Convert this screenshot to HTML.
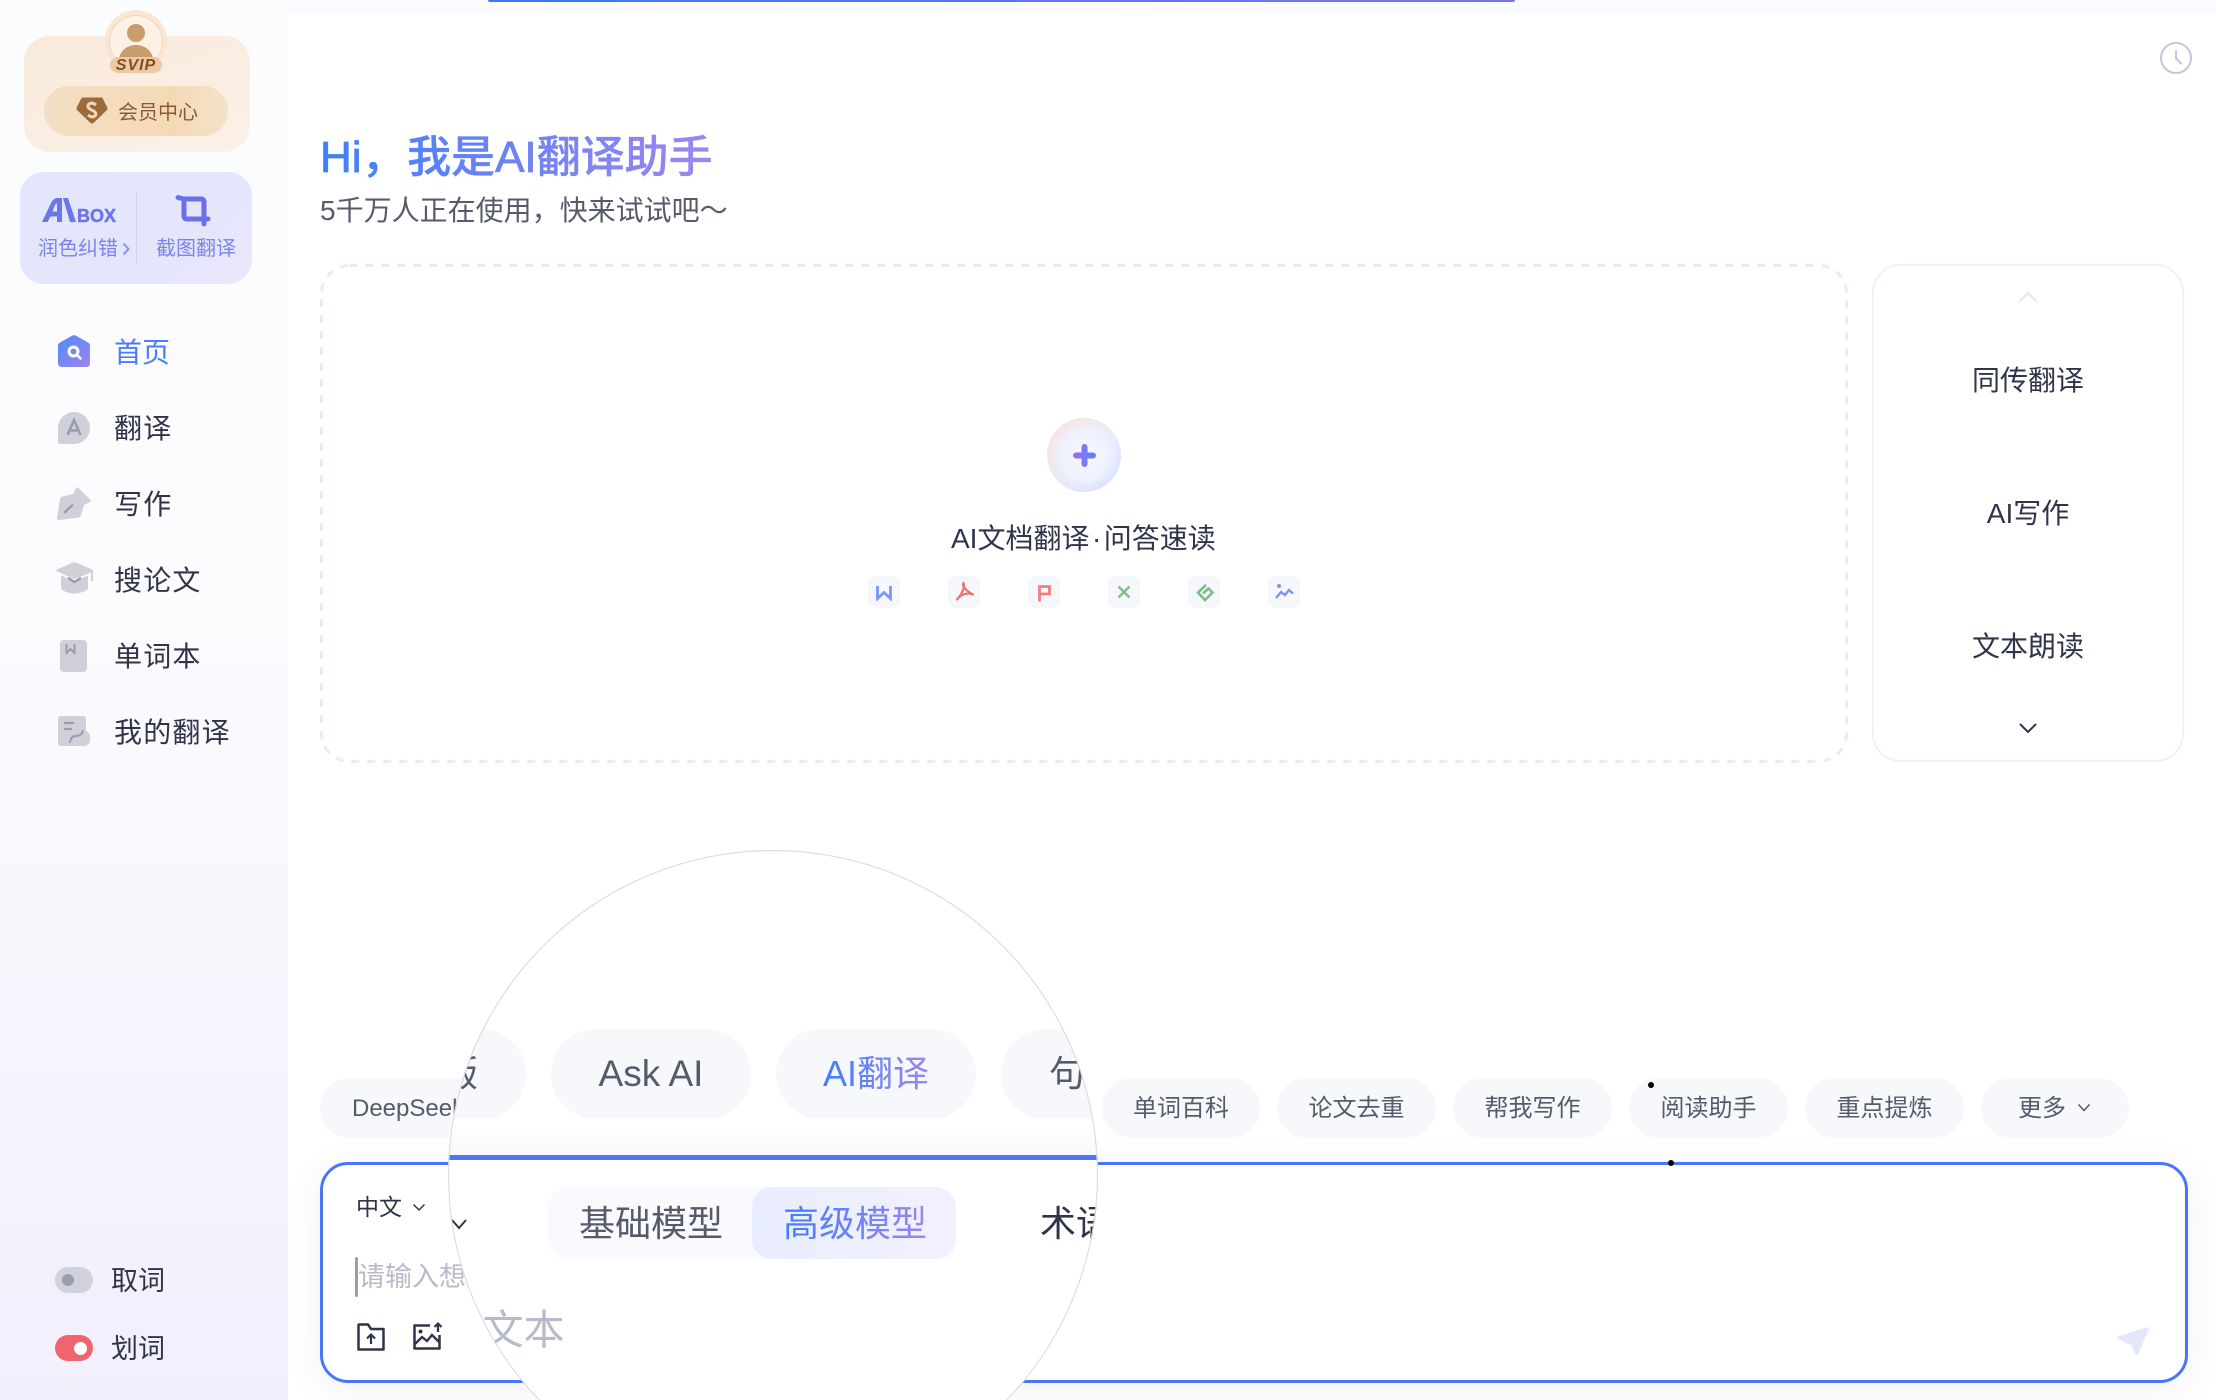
<!DOCTYPE html>
<html lang="zh">
<head>
<meta charset="utf-8">
<title>AI翻译助手</title>
<style>
*{box-sizing:border-box;margin:0;padding:0}
html,body{width:2216px;height:1400px;overflow:hidden;background:#fff}
body{position:relative;font-family:"Liberation Sans","Noto Sans CJK SC",sans-serif;color:#30344a}
.a{position:absolute;white-space:nowrap}
svg{position:absolute;display:block;overflow:visible}
.t{position:absolute;white-space:nowrap;line-height:40px;height:40px;margin-top:1px}
.n{letter-spacing:1.200px}
.g{background:linear-gradient(90deg,#3f7ffd,#9c86ee);-webkit-background-clip:text;background-clip:text;color:transparent}
.chip{position:absolute;top:1078px;height:60px;border-radius:30px;background:#f7f8fc;color:#565b6b;font-size:24px;line-height:62px;text-align:center}
.mchip{position:absolute;top:1029px;height:90px;border-radius:45px;background:#f7f8fc;color:#565b6b;font-size:36px;line-height:90px;text-align:center}
.fi{position:absolute;top:576px;width:32px;height:32px;border-radius:8px;background:#f6f7fc}
</style>
</head>
<body>
<!-- backgrounds -->
<div class="a" style="left:0;top:0;width:288px;height:1400px;background:linear-gradient(180deg,#fbfcfe 0%,#fcfcfe 40%,#f1effc 100%)"></div>
<div class="a" style="left:288px;top:0;width:1928px;height:14px;background:#fafbfe"></div>
<div class="a" style="left:288px;top:14px;width:1928px;height:1386px;background:#fff;border-top-left-radius:22px"></div>
<div class="a" style="left:488px;top:0;width:1027px;height:2px;background:linear-gradient(90deg,#3f75f5,#7a74f0);border-radius:0 0 6px 6px"></div>

<!-- VIP card -->
<div class="a" style="left:24px;top:36px;width:226px;height:116px;border-radius:26px;background:linear-gradient(160deg,#f9eadb,#fbf1e8)"></div>
<div class="a" style="left:105px;top:10px;width:62px;height:62px;border-radius:50%;background:#f9e6d3"></div>
<div class="a" style="left:109px;top:15px;width:54px;height:54px;border-radius:50%;background:#fdf1e5;border:1.5px solid #f3d5b8;overflow:hidden">
  <div class="a" style="left:17px;top:8px;width:18px;height:18px;border-radius:50%;background:#c99c6e"></div>
  <div class="a" style="left:9px;top:29px;width:34px;height:30px;border-radius:50%;background:#c99c6e"></div>
</div>
<div class="a" style="left:110px;top:57px;width:52px;height:16px;border-radius:8px;background:#eec7a5;color:#7d5026;font:italic 700 16px/17px 'Liberation Sans',sans-serif;text-align:center;letter-spacing:1px">SVIP</div>
<div class="a" style="left:44px;top:86px;width:184px;height:50px;border-radius:25px;background:linear-gradient(90deg,#f4dfc4,#f4d9b6 70%,#f5e2ca)"></div>
<svg style="left:76px;top:97px" width="32" height="27" viewBox="0 0 32 27"><path d="M7 0.5H25Q26.500 .5 27 2L31.500 11Q32 12 31 13L17.500 26Q16 27 14.500 26L1 13Q0 12 .5 11L5 2Q5.500 .5 7 .5Z" fill="#9c6b3c"/><path d="M20 8Q15.500 4.500 12.500 7.500Q10.500 10.500 15.500 13Q21 15 19.500 18.500Q16.500 21.500 12 18" fill="none" stroke="#f3d9b8" stroke-width="3"/></svg>
<div class="t" style="left:118px;top:92px;font-size:20px;color:#8a5c33">会员中心</div>

<!-- AI box -->
<div class="a" style="left:20px;top:172px;width:232px;height:112px;border-radius:24px;background:linear-gradient(135deg,#e3e6fd 0%,#e4e6fc 70%,#ece7fb 100%)"></div>
<div class="a" style="left:136px;top:192px;width:1px;height:72px;background:#cfd2f3"></div>
<svg style="left:42px;top:198px" width="76" height="26" viewBox="0 0 76 26"><path fill-rule="evenodd" d="M0 24L9 5Q11.500 0 15 0H20V24H15V18.500H8.500L5.500 24ZM10.500 13.500H15V5.500Q13.800 5.500 13 7.300Z" fill="#6d75ea"/><path d="M21 0H26L34 24H28Z" fill="#6d75ea"/><text x="35" y="24" font-family="Liberation Sans,sans-serif" font-weight="700" font-size="18.500" fill="#6d75ea" stroke="#6d75ea" stroke-width=".5" textLength="39" lengthAdjust="spacingAndGlyphs">BOX</text></svg>
<div class="t" style="left:38px;top:228px;font-size:20px;color:#7d83ec">润色纠错</div>
<svg style="left:122px;top:242px" width="8" height="14" viewBox="0 0 8 14"><path d="M1.500 1.500L6.500 7L1.500 12.500" fill="none" stroke="#8c91ee" stroke-width="2"/></svg>
<div class="t" style="left:156px;top:228px;font-size:20px;color:#7d83ec">截图翻译</div>
<svg style="left:176px;top:194px" width="34" height="32" viewBox="0 0 34 32"><path d="M2 3.500L8 5H25Q28 5 28 8V30M8 5V22Q8 25 11 25H32" fill="none" stroke="#6c70e8" stroke-width="5" stroke-linecap="round" stroke-linejoin="round"/></svg>

<!-- Nav -->
<svg style="left:58px;top:335px" width="32" height="32" viewBox="0 0 32 32"><defs><linearGradient id="hg" x1="0" y1="0" x2="1" y2="1"><stop offset="0" stop-color="#4f8bfb"/><stop offset="1" stop-color="#9d84ee"/></linearGradient></defs><path d="M14 .8Q16 -.3 18 .8L30 7.500Q32 8.700 32 11V28Q32 32 28 32H4Q0 32 0 28V11Q0 8.700 2 7.500Z" fill="url(#hg)"/><circle cx="15.500" cy="16.500" r="4.500" fill="none" stroke="#fff" stroke-width="3"/><path d="M19 20L22.500 23.500" stroke="#fff" stroke-width="2.500" stroke-linecap="round"/></svg>
<div class="t" style="left:114px;top:332px;font-size:28px;color:#4a7dfb">首页</div>

<svg style="left:58px;top:412px" width="32" height="32" viewBox="0 0 32 32"><path d="M16 0A16 16 0 0 1 16 32H3Q0 32 0 29V16A16 16 0 0 1 16 0Z" fill="#cfd0da"/><path d="M9.500 23L16 8L22.500 23M11.500 18.500H20.500" fill="none" stroke="#9a9cab" stroke-width="2.500"/></svg>
<div class="t n" style="left:114px;top:408px;font-size:28px">翻译</div>

<svg style="left:57px;top:487px" width="34" height="33" viewBox="0 0 34 33"><path d="M1 33Q0 33 0 31L3 12Q3.500 10 6 9.500L16 7L19 1Q20 -.5 21.500 1L33.500 13Q34.500 14.500 33 15L27 18L24 28Q23.500 30 21.500 30.500L2 33Z" fill="#cfd0da"/><path d="M8 25L15 18.500" stroke="#9a9cab" stroke-width="2.500" stroke-linecap="round"/></svg>
<div class="t n" style="left:114px;top:484px;font-size:28px">写作</div>

<svg style="left:56px;top:562px" width="37" height="32" viewBox="0 0 37 32"><path d="M17 .5Q18.500 0 20 .5L36 7.500Q37 8 37 9V19H35V10.500L20 16.500Q18.500 17 17 16.500L1 9.500Q-.5 8.500 1 7.500Z" fill="#cfd0da"/><path d="M5 13.500L16.500 18.500Q18.500 19.300 20.500 18.500L32 13.500V25Q32 28 29 29Q18.500 34 8 29Q5 28 5 25Z" fill="#cfd0da"/><path d="M13 16.500L18.500 20L24 16.500" fill="none" stroke="#9a9cab" stroke-width="2.500" stroke-linecap="round"/></svg>
<div class="t n" style="left:114px;top:560px;font-size:28px">搜论文</div>

<svg style="left:60px;top:640px" width="27" height="32" viewBox="0 0 27 32"><rect width="27" height="32" rx="3.500" fill="#cfd0da"/><path d="M6.500 4V13L10.500 9L14.500 13V4" fill="none" stroke="#9a9cab" stroke-width="2"/></svg>
<div class="t n" style="left:114px;top:636px;font-size:28px">单词本</div>

<svg style="left:58px;top:716px" width="32" height="30" viewBox="0 0 32 30"><path d="M3 0H25Q28 0 28 3V15H28A6.500 6.500 0 0 1 32 21V23Q32 30 25 30H3Q0 30 0 27V3Q0 0 3 0Z" fill="#cfd0da"/><path d="M7 7H15M7 13H13" stroke="#9a9cab" stroke-width="2.200" stroke-linecap="round"/><path d="M12 26Q13 20 18 20T25 15" fill="none" stroke="#9a9cab" stroke-width="2" stroke-linecap="round"/></svg>
<div class="t n" style="left:114px;top:712px;font-size:28px">我的翻译</div>

<!-- Toggles -->
<div class="a" style="left:55px;top:1267px;width:38px;height:26px;border-radius:13px;background:#cfd1dd"></div>
<div class="a" style="left:62px;top:1274px;width:12px;height:12px;border-radius:50%;background:#9a9dab"></div>
<div class="t" style="left:111px;top:1260px;font-size:27px">取词</div>
<div class="a" style="left:55px;top:1335px;width:38px;height:26px;border-radius:13px;background:#f0646f"></div>
<div class="a" style="left:74px;top:1342px;width:13px;height:13px;border-radius:50%;background:#fff"></div>
<div class="t" style="left:111px;top:1328px;font-size:27px">划词</div>

<!-- Header -->
<svg style="left:0;top:0" width="800" height="200" viewBox="0 0 800 200"><defs><linearGradient id="hd" gradientUnits="userSpaceOnUse" x1="320" y1="0" x2="710" y2="0"><stop offset="0" stop-color="#3f7ffd"/><stop offset="1" stop-color="#9c86ee"/></linearGradient></defs><text x="320" y="172" font-family="Liberation Sans,Noto Sans CJK SC,sans-serif" font-size="44" font-weight="500" fill="url(#hd)" stroke="url(#hd)" stroke-width=".35"><tspan stroke-width=".8">Hi</tspan>，<tspan dx="1.500">我是</tspan><tspan stroke-width=".8">AI</tspan>翻译助手</text></svg>
<div class="t" style="left:320px;top:190px;font-size:28px;color:#565b6b">5千万人正在使用，快来试试吧～</div>
<svg style="left:2160px;top:42px" width="32" height="32" viewBox="0 0 32 32"><circle cx="16" cy="16" r="15" fill="none" stroke="#c3c7d7" stroke-width="2"/><path d="M16 9V16.500L21 21.500" fill="none" stroke="#c3c7d7" stroke-width="2" stroke-linecap="round"/></svg>

<!-- Upload area -->
<svg style="left:320px;top:264px" width="1528" height="499" viewBox="0 0 1528 499"><rect x="1.500" y="1.500" width="1525" height="496" rx="28" fill="none" stroke="#e8ebf8" stroke-width="3" stroke-dasharray="8 8"/></svg>
<div class="a" style="left:1047px;top:418px;width:74px;height:74px;border-radius:50%;background:radial-gradient(circle at 52% 50%,#f6f8ff 0%,#eef1fe 45%,rgba(238,241,254,0) 72%),linear-gradient(135deg,#f6dcf2 0%,#f6e6de 28%,#e4e8fd 60%,#c5d9fd 100%)"></div>
<svg style="left:1072.500px;top:444px" width="23" height="23" viewBox="0 0 23 23"><defs><linearGradient id="pg" x1="0" y1="0" x2="1" y2="0"><stop offset="0" stop-color="#9a6cf0"/><stop offset="1" stop-color="#5b84f5"/></linearGradient></defs><path d="M11.500 3V20M3 11.500H20" stroke="url(#pg)" stroke-width="6" stroke-linecap="round" fill="none"/></svg>
<div class="t" style="left:951px;top:518px;font-size:28px">AI文档翻译<span style="margin:0 2.500px">·</span>问答速读</div>

<div class="fi" style="left:868px"><svg style="left:8px;top:10px" width="16" height="14" viewBox="0 0 16 14"><path d="M1.500 0V12.500L8 6.500L14.500 12.500V0" fill="none" stroke="#7a96f7" stroke-width="2.800"/></svg></div>
<div class="fi" style="left:948px"><svg style="left:0;top:0" width="32" height="32" viewBox="0 0 32 32"><path d="M15.500 7C14 9 16.500 14 25 18.500C20 16.500 14 17.500 9 23.500M15.500 7C17 10 14.500 18 9 23.500" fill="none" stroke="#ee7070" stroke-width="2.200" stroke-linecap="round" stroke-linejoin="round"/></svg></div>
<div class="fi" style="left:1028px"><svg style="left:10px;top:9px" width="13" height="17" viewBox="0 0 13 17"><path d="M1.500 16.500V1.500H11.500V9H1.500" fill="none" stroke="#f08080" stroke-width="2.800"/></svg></div>
<div class="fi" style="left:1108px"><svg style="left:9px;top:9px" width="14" height="14" viewBox="0 0 14 14"><path d="M1.500 1.500L12.500 12.500M12.500 1.500L1.500 12.500" stroke="#82bd8c" stroke-width="2.500" fill="none"/></svg></div>
<div class="fi" style="left:1188px"><svg style="left:0;top:0" width="32" height="32" viewBox="0 0 32 32"><path d="M18 9L10 16.500L17 24L24.500 16.500L20.500 12.500L15 17.500" fill="none" stroke="#7fbc85" stroke-width="2.600"/></svg></div>
<div class="fi" style="left:1268px"><svg style="left:7px;top:8px" width="19" height="16" viewBox="0 0 19 16"><circle cx="4" cy="2" r="2" fill="#7f90f7"/><path d="M1 14L6 8L10 11L14 6L18 9.500" fill="none" stroke="#7f90f7" stroke-width="2.400"/></svg></div>

<!-- Right panel -->
<div class="a" style="left:1872px;top:264px;width:312px;height:498px;border:2px solid #eff1fb;border-radius:28px;background:#fff"></div>
<svg style="left:2018px;top:291px" width="20" height="12" viewBox="0 0 20 12"><path d="M1.500 10.500L10 2L18.500 10.500" fill="none" stroke="#e6e8f6" stroke-width="2.500"/></svg>
<div class="t" style="left:1872px;width:312px;text-align:center;top:360px;font-size:28px">同传翻译</div>
<div class="t" style="left:1872px;width:312px;text-align:center;top:493px;font-size:28px">AI写作</div>
<div class="t" style="left:1872px;width:312px;text-align:center;top:626px;font-size:28px">文本朗读</div>
<svg style="left:2018px;top:722px" width="20" height="12" viewBox="0 0 20 12"><path d="M2 2L10 10L18 2" fill="none" stroke="#30344a" stroke-width="2"/></svg>

<!-- Chips -->
<div class="chip" style="left:320px;width:240px;text-align:left;padding-left:32px">DeepSeek满血版</div>
<div class="chip" style="left:1102px;width:158px">单词百科</div>
<div class="chip" style="left:1277px;width:159px">论文去重</div>
<div class="chip" style="left:1453px;width:159px">帮我写作</div>
<div class="chip" style="left:1629px;width:159px">阅读助手</div>
<div class="chip" style="left:1805px;width:159px">重点提炼</div>
<div class="chip" style="left:1981px;width:148px;text-align:left;padding-left:37px">更多</div>
<svg style="left:2077px;top:1103px" width="14" height="10" viewBox="0 0 14 10"><path d="M1.500 1.500L7 7.500L12.500 1.500" fill="none" stroke="#565b6b" stroke-width="1.600"/></svg>

<!-- Input -->
<div class="a" style="left:320px;top:1162px;width:1868px;height:221px;border:3px solid #4a76f5;border-radius:28px;background:#fff;box-shadow:0 6px 36px rgba(90,100,170,.09)"></div>
<div class="t" style="left:356px;top:1186px;font-size:23px">中文</div>
<svg style="left:412px;top:1203px" width="14" height="9" viewBox="0 0 14 9"><path d="M1.500 1.500L7 7L12.500 1.500" fill="none" stroke="#30344a" stroke-width="1.500"/></svg>
<div class="t" style="left:358px;top:1256px;font-size:27px;color:#b6bac9">请输入想要翻译的文本</div>
<div class="a" style="left:355px;top:1257px;width:3px;height:40px;border-radius:2px;background:#9a9dab"></div>
<svg style="left:357px;top:1323px" width="28" height="28" viewBox="0 0 28 28"><path d="M2 1.500H11L14 6H26.500V26.500H1.500V2Z" fill="none" stroke="#30344a" stroke-width="2.500" stroke-linejoin="round"/><path d="M14 21V12M10 15.500L14 11.500L18 15.500" fill="none" stroke="#30344a" stroke-width="2.200"/></svg>
<svg style="left:413px;top:1322px" width="28" height="28" viewBox="0 0 28 28"><path d="M17 3.500H1.500V26.500H26.500V13" fill="none" stroke="#30344a" stroke-width="2.500" stroke-linejoin="round"/><circle cx="7.500" cy="9.500" r="2" fill="#30344a"/><path d="M2 22L9 15L14 19L19 13L26 20" fill="none" stroke="#30344a" stroke-width="2.300"/><path d="M25 10V2M21.500 5L25 1.500L28.500 5" fill="none" stroke="#30344a" stroke-width="2.200"/></svg>
<svg style="left:2117px;top:1327px" width="32" height="29" viewBox="0 0 32 29"><path d="M30 .3Q32 -.4 32 2L21 27Q19 30 18 27L14.500 18.500L1 12Q-1 10.500 1 9.500Z" fill="#e3e7fb"/></svg>
<div class="a" style="left:1648px;top:1082px;width:6px;height:6px;border-radius:50%;background:#000"></div>
<div class="a" style="left:1668px;top:1160px;width:6px;height:6px;border-radius:50%;background:#000"></div>

<!-- Magnifier -->
<div class="a" style="left:448px;top:850px;width:650px;height:550px;overflow:hidden;clip-path:circle(325px at 325px 325px);background:#fff">
  <div class="a" style="left:-448px;top:-850px;width:2216px;height:1400px;overflow:hidden">
    <div class="a" style="left:448px;top:1125px;width:650px;height:30px;background:linear-gradient(180deg,#fff,#f7f8fb)"></div>
    <div class="mchip" style="left:300px;width:226px;text-align:right;padding-right:48px">满血版</div>
    <div class="mchip" style="left:551px;width:200px;font-size:37px">Ask AI</div>
    <div class="mchip" style="left:776px;width:200px"><span class="g">AI翻译</span></div>
    <div class="mchip" style="left:1001px;width:97px;overflow:hidden;border-radius:45px 0 0 45px;text-align:left;padding-left:48px">句子分析</div>
    <div class="a" style="left:448px;top:1155px;width:650px;height:5px;background:#4a76f5"></div>
    <svg style="left:450px;top:1218px" width="20" height="12" viewBox="0 0 20 12"><path d="M2 2L9 10L16 2" fill="none" stroke="#30344a" stroke-width="2"/></svg>
    <div class="a" style="left:548px;top:1187px;width:408px;height:72px;border-radius:20px;background:#fafafe"></div>
    <div class="a" style="left:752px;top:1187px;width:204px;height:72px;border-radius:20px;background:linear-gradient(90deg,#e8eefe,#f2f0fe)"></div>
    <div class="a" style="left:579px;top:1199px;height:50px;line-height:50px;font-size:36px;color:#565b6b">基础模型</div>
    <div class="a g" style="left:783px;top:1199px;height:50px;line-height:50px;font-size:36px">高级模型</div>
    <div class="a" style="left:1040px;top:1199px;width:58px;overflow:hidden;height:50px;line-height:50px;font-size:36px;color:#30344a">术语</div>
    <div class="a" style="left:482.500px;top:1305px;height:50px;line-height:50px;font-size:41px;color:#b6bac9">文本</div>
  </div>
  <div class="a" style="left:0;top:0;width:650px;height:550px;background:radial-gradient(circle 325px at 325px 325px,rgba(217,217,220,0) 323.600px,#d9d9dc 324.200px,#d9d9dc 325px)"></div>
</div>
</body>
</html>
